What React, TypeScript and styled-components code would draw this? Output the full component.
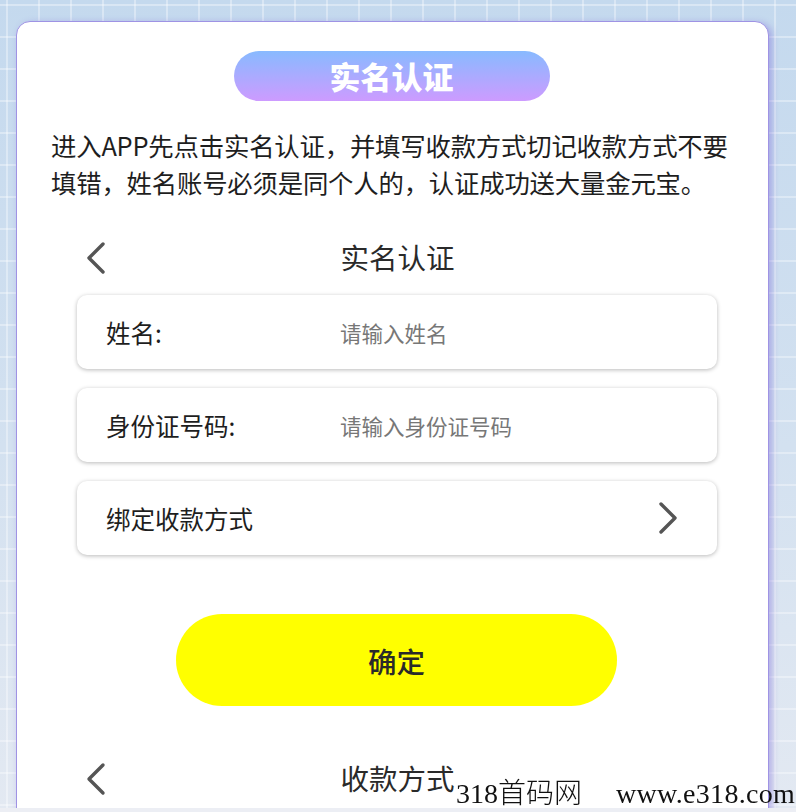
import styled, { createGlobalStyle } from 'styled-components';

const GlobalStyle = createGlobalStyle`
  html, body {
    margin: 0;
    padding: 0;
  }
  body {
    background-color: #c8dcef;
    background-image:
      linear-gradient(rgba(255, 255, 255, 0.35) 2px, transparent 2px),
      linear-gradient(90deg, rgba(255, 255, 255, 0.35) 2px, transparent 2px),
      linear-gradient(180deg, #c4d9ee 0%, #d3e1f0 55%, #e3e9f2 100%);
    background-size: 32px 32px, 32px 32px, 100% 100%;
    background-position: 0 4px, 6px 0, 0 0;
    font-family: 'Noto Sans CJK SC', 'Noto Sans', sans-serif;
    overflow: hidden;
    height: 812px;
  }
`;

/** 输入项 */
const fields = [
  { label: '姓名:', placeholder: '请输入姓名' },
  { label: '身份证号码:', placeholder: '请输入身份证号码' },
];

function ChevronLeft() {
  return (
    <svg width="22" height="34" viewBox="0 0 22 34">
      <polyline
        points="18,3 4,17 18,31"
        fill="none"
        stroke="#555"
        strokeWidth="3.4"
        strokeLinecap="round"
        strokeLinejoin="round"
      />
    </svg>
  );
}

function ChevronRight() {
  return (
    <svg width="22" height="34" viewBox="0 0 22 34">
      <polyline
        points="4,3 18,17 4,31"
        fill="none"
        stroke="#555"
        strokeWidth="3.4"
        strokeLinecap="round"
        strokeLinejoin="round"
      />
    </svg>
  );
}

export default function App() {
  return (
    <>
      <GlobalStyle />
      <Card>
        <TitlePill>实名认证</TitlePill>

        <Notice>
          进入APP先点击实名认证，并填写收款方式切记收款方式不要
          <br />
          填错，姓名账号必须是同个人的，认证成功送大量金元宝。
        </Notice>

        <NavBar>
          <BackButton>
            <ChevronLeft />
          </BackButton>
          <NavTitle>实名认证</NavTitle>
        </NavBar>

        <Form>
          {fields.map((field) => (
            <FieldRow key={field.label}>
              <FieldLabel>{field.label}</FieldLabel>
              <FieldInput placeholder={field.placeholder} />
            </FieldRow>
          ))}
          <FieldRow>
            <FieldLabel>绑定收款方式</FieldLabel>
            <RowArrow>
              <ChevronRight />
            </RowArrow>
          </FieldRow>
        </Form>

        <ConfirmButton>确定</ConfirmButton>

        <NavBar $second>
          <BackButton>
            <ChevronLeft />
          </BackButton>
          <NavTitle>收款方式</NavTitle>
        </NavBar>
      </Card>

      <Watermark>
        318首码网<Site>www.e318.com</Site>
      </Watermark>
      <BottomStrip />
    </>
  );
}

const Card = styled.main`
  box-sizing: border-box;
  width: 753px;
  height: 820px;
  margin: 21px 0 0 16px;
  padding-top: 29px;
  background: #fff;
  border: 1.5px solid #9f93e4;
  border-radius: 14px;
  box-shadow: 3px 2px 7px rgba(120, 100, 215, 0.45);
  display: flex;
  flex-direction: column;
`;

const TitlePill = styled.h1`
  align-self: center;
  width: 316px;
  height: 50px;
  margin: 0 0 0 -2px;
  border-radius: 25px;
  background: linear-gradient(180deg, #88baff 0%, #cd9bff 100%);
  color: #fff;
  font-size: 31px;
  font-weight: 900;
  line-height: 50px;
  text-align: center;
  letter-spacing: 0;
`;

const Notice = styled.p`
  margin: 26px 0 0 34px;
  font-size: 25.4px;
  font-weight: 400;
  line-height: 37px;
  color: #1e1e1e;
  letter-spacing: -0.2px;
  white-space: nowrap;
`;

const NavBar = styled.div<{ $second?: boolean }>`
  position: relative;
  display: flex;
  align-items: center;
  justify-content: center;
  height: 60px;
  margin-top: ${(p) => (p.$second ? '43px' : '27px')};
`;

const BackButton = styled.span`
  position: absolute;
  left: 68px;
  top: 13px;
  display: flex;
`;

const NavTitle = styled.span`
  font-size: 28.5px;
  font-weight: 400;
  color: #2a2a2a;
  margin: -4px 0 0 10px;
`;

const Form = styled.section`
  display: flex;
  flex-direction: column;
  gap: 19px;
  margin: 7px 0 0 60px;
  width: 640px;
`;

const FieldRow = styled.div`
  box-sizing: border-box;
  display: flex;
  align-items: center;
  height: 74px;
  padding: 0 38px 0 29px;
  background: #fff;
  border-radius: 10px;
  box-shadow: 0 1px 4px rgba(0, 0, 0, 0.28);
`;

const FieldLabel = styled.span`
  flex: 0 0 234px;
  font-size: 24.5px;
  font-weight: 400;
  color: #1e1e1e;
`;

const FieldInput = styled.input`
  flex: 1;
  border: none;
  outline: none;
  background: transparent;
  font-family: inherit;
  font-size: 21.5px;
  color: #333;
  padding: 0;

  &::placeholder {
    color: #777;
  }
`;

const RowArrow = styled.span`
  margin-left: auto;
  display: flex;
`;

const ConfirmButton = styled.button`
  align-self: center;
  width: 441px;
  height: 92px;
  margin: 59px 0 0 8px;
  border: none;
  border-radius: 46px;
  background: #ffff00;
  color: #2a2a2a;
  font-family: inherit;
  font-size: 28.5px;
  font-weight: 500;
`;

const Watermark = styled.div`
  position: fixed;
  left: 456px;
  bottom: 1px;
  font-family: 'Liberation Serif', 'Noto Sans CJK SC', serif;
  font-size: 28px;
  font-weight: 300;
  color: #111;
  line-height: 34px;
  white-space: nowrap;
`;

const Site = styled.span`
  margin-left: 34px;
  letter-spacing: 0.3px;
`;

const BottomStrip = styled.div`
  position: fixed;
  left: 0;
  right: 0;
  bottom: 0;
  height: 4px;
  background: #eceef4;
`;
